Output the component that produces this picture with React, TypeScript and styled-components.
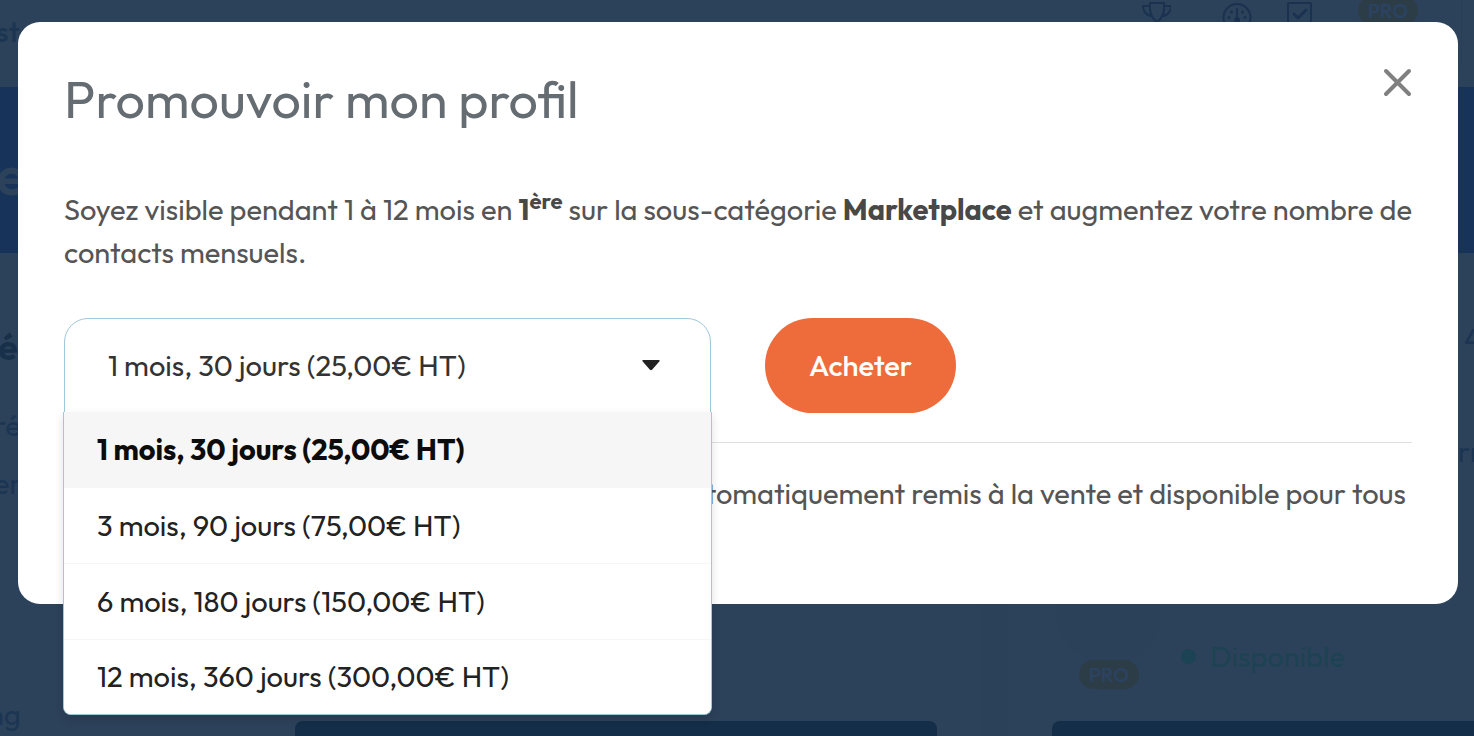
import React, { useState } from "react";
import styled, { createGlobalStyle } from "styled-components";

const GlobalStyle = createGlobalStyle`
  *, *::before, *::after { box-sizing: border-box; }
  body {
    margin: 0;
    background: #2c425a;
    font-family: "Outfit", "Lato", "Open Sans", sans-serif;
    font-size: 29px;
    line-height: 43px;
    color: #555;
  }
  button, select { font: inherit; }
  h1, h2, p, ul { margin: 0; padding: 0; }
`;

/* ---------- dimmed page ---------- */

const Page = styled.div`
  height: 100vh;
  overflow: hidden;
  display: flex;
  flex-direction: column;
  background: #2c425a;
  color: #1c3552;
`;

const TopBar = styled.header`
  flex: none;
  height: 87px;
  display: flex;
  justify-content: space-between;
  align-items: flex-start;
`;

const Brand = styled.span`
  padding-top: 10px;
  margin-left: -4px;
  font-weight: 500;
`;

const Tools = styled.div`
  height: 65px;
  padding-right: 43px;
  margin-right: 12px;
  border-right: 1px solid #283d56;
  display: flex;
  align-items: flex-start;
`;

const ToolIcon = styled.svg<{ $gap: number }>`
  width: 30px;
  height: 30px;
  margin-right: ${(p) => p.$gap}px;
  fill: none;
  stroke: #1a3150;
  stroke-width: 2;
  stroke-linejoin: round;
  stroke-linecap: round;
`;

const ProBadge = styled.span`
  width: 60px;
  height: 29px;
  border-radius: 15px;
  background: #2d3d48;
  color: #2b4260;
  font-size: 20px;
  line-height: 29px;
  font-weight: 600;
  text-align: center;
`;

const ToolBadge = styled(ProBadge)`
  margin-top: -4px;
`;

const Hero = styled.section`
  flex: none;
  height: 166px;
  padding-top: 8px;
  display: flex;
  align-items: center;
  background: #173359;
  color: #2c425a;
  font-size: 56px;
  font-weight: 600;
`;

const HeroText = styled.p`
  margin-left: -4px;
`;

const Listing = styled.main`
  flex: 1;
  min-height: 0;
  display: grid;
  grid-template-columns: minmax(0, 980fr) 29px minmax(0, 465fr);
`;

const Gutter = styled.div`
  background: #2b4159;
`;

const Column = styled.section`
  display: flex;
  flex-direction: column;
  justify-content: space-between;
`;

const Facts = styled.div`
  padding-top: 72px;
  margin-left: -6px;
`;

const Fact = styled.p<{ $strong?: boolean; $gap?: number }>`
  font-size: ${(p) => (p.$strong ? "36px" : "29px")};
  font-weight: ${(p) => (p.$strong ? 700 : 400)};
  padding-left: ${(p) => (p.$strong ? "4px" : "0")};
  margin-bottom: ${(p) => p.$gap || 0}px;
  color: ${(p) => (p.$strong ? "#19304b" : "#1c3552")};
`;

const SideFacts = styled(Facts)`
  width: 16px;
  margin-left: 0;
  padding-top: 64px;
  align-self: flex-end;
`;

const SideFigure = styled(Fact)`
  padding-left: 6px;
`;

const CardFoot = styled.div`
  display: flex;
  align-items: flex-end;
  justify-content: space-between;
  margin-left: -12px;
`;

const Action = styled.div`
  width: 642px;
  height: 15px;
  margin-right: 43px;
  border-radius: 8px 8px 0 0;
  background: #142d48;
`;

const Seller = styled.div`
  display: flex;
  align-items: flex-end;
  padding-left: 48px;
`;

const Portrait = styled.div`
  display: flex;
  flex-direction: column;
  align-items: center;
  padding-bottom: 32px;
`;

const Avatar = styled.div`
  width: 104px;
  height: 100px;
  margin-bottom: -5px;
  border-radius: 50%;
  background: #2b4159;
`;

const Status = styled.p`
  display: flex;
  align-items: center;
  gap: 14px;
  padding: 0 0 43px 20px;
  color: #1d4353;
  &::before {
    content: "";
    width: 15px;
    height: 15px;
    border-radius: 50%;
    background: #1b4353;
  }
`;

const WideAction = styled.div`
  height: 15px;
  margin-left: 43px;
  border-radius: 8px 0 0 0;
  background: #142d48;
`;

/* ---------- dialog ---------- */

const Overlay = styled.div`
  position: fixed;
  inset: 0;
  padding: 22px 16px 0 18px;
`;

const Dialog = styled.section`
  padding: 44px 46px 46px;
  border-radius: 22px;
  background: #fff;
`;

const DialogHead = styled.header`
  display: flex;
  justify-content: space-between;
  align-items: flex-start;
`;

const Title = styled.h1`
  font-size: 52px;
  line-height: 66px;
  font-weight: 400;
  color: #656d72;
`;

const Close = styled.button`
  display: flex;
  padding: 0;
  border: 0;
  background: none;
  cursor: pointer;
  svg { width: 30px; height: 34px; stroke: #808080; stroke-width: 4; stroke-linecap: round; }
`;

const Intro = styled.p`
  padding-top: 56px;
  sup { font-size: 22px; line-height: 0; vertical-align: 11px; }
  b { color: #484848; }
`;

const Purchase = styled.form`
  display: flex;
  gap: 54px;
  padding: 44px 0 29px;
  border-bottom: 1px solid #dfe0e1;
`;

const Picker = styled.div`
  position: relative;
  width: 48%;
`;

const Select = styled.select`
  display: block;
  width: 100%;
  height: 95px;
  padding: 0 43px;
  border: 1px solid #9fc8da;
  border-radius: 24px 24px 0 0;
  background: #fff;
  color: #333;
  appearance: none;
  outline: 0;
`;

const Caret = styled.svg`
  position: absolute;
  right: 51px;
  top: 42px;
  width: 18px;
  height: 11px;
  fill: #222;
  pointer-events: none;
`;

const Menu = styled.ul`
  position: absolute;
  top: 94px;
  left: -1px;
  right: -1px;
  list-style: none;
  overflow: hidden;
  border: 1px solid #9fc8da;
  border-top: 0;
  border-radius: 0 0 8px 8px;
  background: #fff;
  box-shadow: 0 4px 10px rgba(0, 0, 0, 0.12);
`;

const Option = styled.li<{ $active: boolean }>`
  height: 76px;
  padding: 0 33px;
  line-height: 76px;
  border-bottom: 1px solid #f6f6f6;
  white-space: nowrap;
  cursor: pointer;
  color: ${(p) => (p.$active ? "#0c0c0c" : "#222")};
  font-weight: ${(p) => (p.$active ? 700 : 400)};
  background: ${(p) => (p.$active ? "#f6f6f6" : "#fff")};
  &:last-child { height: 74px; line-height: 74px; border-bottom: 0; }
`;

const Buy = styled.button`
  height: 95px;
  width: 191px;
  border: 0;
  border-radius: 48px;
  background: #ee6b3b;
  color: #fff;
  font-weight: 500;
  cursor: pointer;
`;

const Note = styled.p`
  padding-top: 29px;
`;

const offers = [
  "1 mois, 30 jours (25,00€ HT)",
  "3 mois, 90 jours (75,00€ HT)",
  "6 mois, 180 jours (150,00€ HT)",
  "12 mois, 360 jours (300,00€ HT)",
];

export default function App() {
  const [offer, setOffer] = useState(offers[0]);
  return (
    <>
      <GlobalStyle />
      <Page aria-hidden="true">
        <TopBar>
          <Brand>ste</Brand>
          <Tools>
            <ToolIcon $gap={51} viewBox="0 0 30 30">
              <path d="M9 3h14v6c0 6-3 10-7 13C12 19 9 15 9 9zM9 6H2c0 6 4 10 9 10M23 6h7c0 6-4 10-9 10M16 22v5" />
            </ToolIcon>
            <ToolIcon $gap={32} viewBox="0 0 30 30">
              <circle cx="15" cy="17.500" r="13.500" />
              <path strokeWidth="2" d="M15 9v10" />
              <circle cx="15" cy="20" r="2" fill="#1a3150" />
              <path strokeWidth="3" d="M9.500 12h0M20.500 12h0M7 17.500h0M23 17.500h0" />
            </ToolIcon>
            <ToolIcon $gap={44} viewBox="0 0 30 30">
              <rect x="4" y="3" width="23" height="24" rx="1" />
              <path strokeWidth="3" d="M10 14l4 4 8-8" />
            </ToolIcon>
            <ToolBadge>PRO</ToolBadge>
          </Tools>
        </TopBar>
        <Hero>
          <HeroText>e</HeroText>
        </Hero>
        <Listing>
          <Column>
            <Facts>
              <Fact $strong $gap={36}>é</Fact>
              <Fact $gap={15}>ré</Fact>
              <Fact>er</Fact>
            </Facts>
            <CardFoot>
              <Fact>ng</Fact>
              <Action />
            </CardFoot>
          </Column>
          <Gutter />
          <Column>
            <SideFacts>
              <SideFigure $gap={70}>4</SideFigure>
              <Fact>rn</Fact>
            </SideFacts>
            <div>
              <Seller>
                <Portrait>
                  <Avatar />
                  <ProBadge>PRO</ProBadge>
                </Portrait>
                <Status>Disponible</Status>
              </Seller>
              <WideAction />
            </div>
          </Column>
        </Listing>
      </Page>
      <Overlay>
        <Dialog role="dialog" aria-modal="true" aria-labelledby="promo-title">
          <DialogHead>
            <Title id="promo-title">Promouvoir mon profil</Title>
            <Close type="button" aria-label="Fermer">
              <svg viewBox="0 0 30 34">
                <path d="M4 5l23 23M27 5L4 28" />
              </svg>
            </Close>
          </DialogHead>
          <Intro>
            Soyez visible pendant 1 à 12 mois en <b>1<sup>ère</sup></b> sur la sous-catégorie <b>Marketplace</b> et
            augmentez votre nombre de contacts mensuels.
          </Intro>
          <Purchase onSubmit={(e) => e.preventDefault()}>
            <Picker>
              <Select aria-label="Durée" value={offer} onChange={(e) => setOffer(e.target.value)}>
                {offers.map((o) => (
                  <option key={o}>{o}</option>
                ))}
              </Select>
              <Caret viewBox="0 0 18 11">
                <path d="M1.500 0h15q2 0 .8 1.500l-7 8q-1.300 1.500-2.600 0l-7-8Q-.5 0 1.500 0z" />
              </Caret>
              <Menu role="listbox" aria-label="Durées proposées">
                {offers.map((o) => (
                  <Option key={o} role="option" aria-selected={o === offer} $active={o === offer} onClick={() => setOffer(o)}>
                    {o}
                  </Option>
                ))}
              </Menu>
            </Picker>
            <Buy type="submit">Acheter</Buy>
          </Purchase>
          <Note>
            À la fin de la durée retenue, l'emplacement sera automatiquement remis à la vente et disponible pour tous
            les vendeurs.
          </Note>
        </Dialog>
      </Overlay>
    </>
  );
}
